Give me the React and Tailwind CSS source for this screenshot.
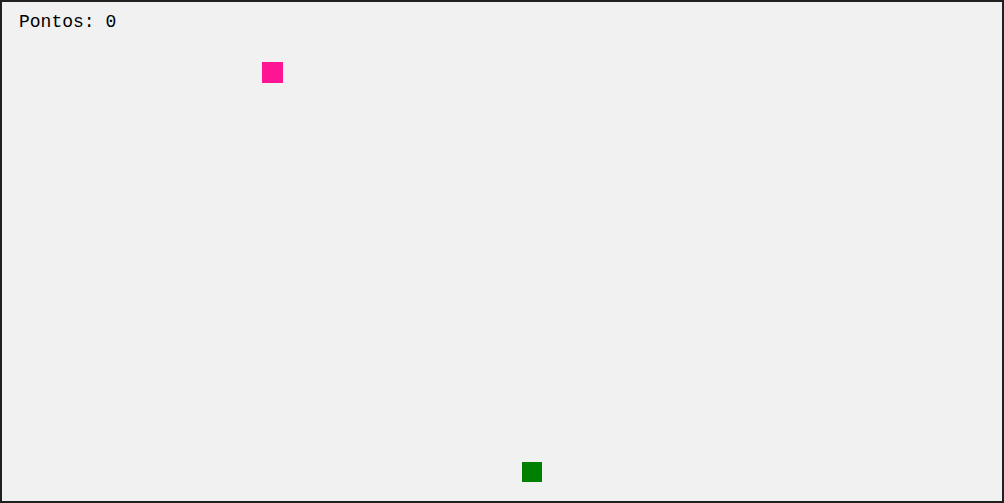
const App = () => {
  // game pieces on the field
  const pieces = [
    { id: 'food', x: 260, y: 60, size: 'w-[21px] h-[21px]', color: 'bg-[#ff1493]' },
    { id: 'player', x: 520, y: 460, size: 'w-5 h-5', color: 'bg-[#008000]' },
  ];

  return (
    <div className="w-[1004px] h-[503px] bg-[#f1f1f1] border-2 border-[#202020] relative overflow-hidden">
      <div className="pl-[17px] pt-[10px] text-[18px] leading-[normal] text-black font-['Liberation_Mono','Courier_New',monospace]">
        Pontos: 0
      </div>

      {pieces.map(p => (
        <div
          key={p.id}
          className={`absolute ${p.size} ${p.color}`}
          style={{ left: p.x, top: p.y }}
        />
      ))}

      {/* little marks on the frame */}
      <div className="absolute -left-[2px] top-[75px] w-[2px] h-px bg-[#6a6a6a]" />
      <div className="absolute -left-[2px] top-[89px] w-[2px] h-px bg-[#6a6a6a]" />
      <div className="absolute -right-[2px] top-[75px] w-[2px] h-px bg-[#6a6a6a]" />
      <div className="absolute -right-[2px] top-[89px] w-[2px] h-px bg-[#6a6a6a]" />
    </div>
  );
};

export default App;
